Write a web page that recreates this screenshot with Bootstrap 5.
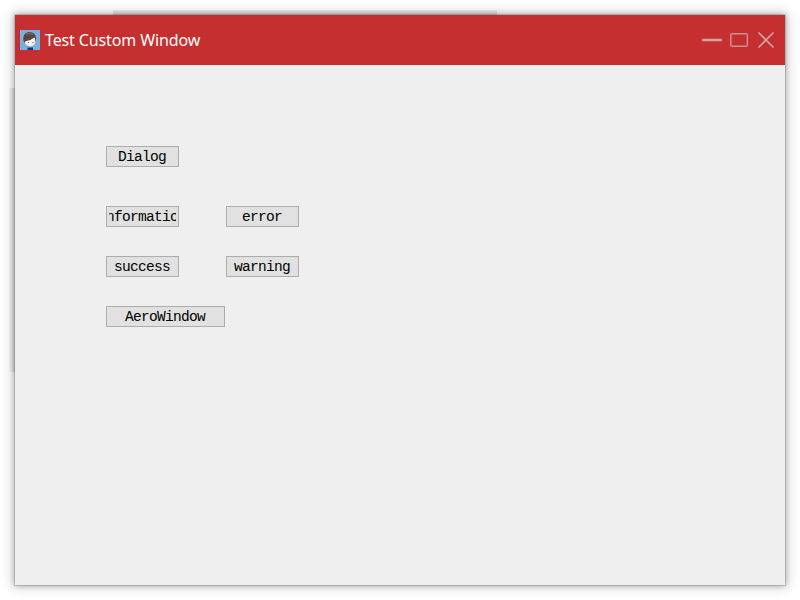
<!DOCTYPE html>
<html lang="en">
<head>
<meta charset="utf-8">
<meta name="viewport" content="width=device-width, initial-scale=1">
<title>Test Custom Window</title>
<link rel="stylesheet" href="https://cdn.jsdelivr.net/npm/bootstrap@5.3.0/dist/css/bootstrap.min.css">
<style>
  body { background: #fff; }
  .stage { width: 800px; height: 600px; padding: 15px; }
  .app-window {
    background: #efefef;
    box-shadow: 0 0 0 1px rgba(0,0,0,.12), 0 0 5px 1px rgba(0,0,0,.24), 0 0 13px 2px rgba(0,0,0,.18);
  }
  /* denser stretches of the window shadow */
  .shade-top { position: absolute; left: 98px; top: -5px; width: 384px; height: 5px; background: linear-gradient(rgba(0,0,0,.06), rgba(0,0,0,.13)); }
  .shade-left { position: absolute; left: -6px; top: 73px; width: 6px; height: 284px; background: linear-gradient(to right, rgba(0,0,0,.03), rgba(0,0,0,.12)); }
  .title-bar { height: 50px; background: #c62f2f; padding: 0 7px 0 5px; }
  .title-text { font: 16px/20px "Noto Sans", "Open Sans", sans-serif; letter-spacing: -.12px; color: #fff; margin-left: 5px; white-space: nowrap; }
  .win-btn { background: none; width: 20px; height: 20px; }
  .client { padding: 81px 0 0 91px; }
  .form-grid { display: grid; grid-template-columns: 73px 73px; gap: 29px 47px; margin: 39px 0 29px; }
  .btn-native {
    width: 73px; height: 21px; padding: 0 2px;
    border: 1px solid #adadad; border-radius: 0; background: #e1e1e1; color: #000;
    font: 14.5px/19px "Liberation Mono", monospace; letter-spacing: -.7px;
  }
  .btn-native:hover { background: #e5f1fb; border-color: #0078d7; color: #000; }
  .btn-native span { width: 67px; height: 19px; overflow: hidden; padding: 1px 1px 0 0; }
  .btn-wide { width: 119px; }
  .btn-wide span { width: 113px; }
</style>
</head>
<body>
<div class="stage overflow-hidden">
  <div class="app-window position-relative w-100 h-100">
    <div class="shade-top"></div>
    <div class="shade-left"></div>
    <header class="title-bar d-flex align-items-center">
      <svg class="flex-shrink-0" width="20" height="20" viewBox="0 0 20 20" aria-hidden="true">
        <rect width="20" height="20" fill="#78b1df"/>
        <path d="M7.5 20V17.5H13V20Z" fill="#143a70"/>
        <path d="M4.2 9Q4 14.5 9.5 16.5Q14.5 16 15.5 12V8Z" fill="#f8f1ef"/>
        <path d="M3.3 10.5Q2.5 3 8.5 2Q15.5 1.5 16 8V12.2Q15.2 10.8 14.5 7.2Q11 10.5 5.5 11.2L4.6 13Z" fill="#5b4541"/>
        <path d="M6 4.2Q9 2.6 13 4.4" fill="none" stroke="#8b706b"/>
        <path d="M8 12.6H9M12.4 12.6H13.6" stroke="#6b5a58"/>
      </svg>
      <div class="title-text">Test Custom Window</div>
      <div class="d-flex ms-auto align-items-center">
        <button class="win-btn border-0 p-0 d-flex" aria-label="Minimize">
          <svg width="20" height="20" viewBox="0 0 20 20"><path d="M1 10H19" stroke="#cfa4a4" stroke-width="2.4" stroke-linecap="round"/></svg>
        </button>
        <button class="win-btn border-0 p-0 d-flex mx-2" aria-label="Maximize">
          <svg width="20" height="20" viewBox="0 0 20 20"><rect x=".8" y="3.8" width="16.6" height="12.4" rx="1.3" fill="none" stroke="#cd9090" stroke-width="1.5"/></svg>
        </button>
        <button class="win-btn border-0 p-0 d-flex" aria-label="Close">
          <svg width="20" height="20" viewBox="0 0 20 20"><path d="M1 3L15 17M15 3L1 17" stroke="#d4a5a5" stroke-width="1.7" stroke-linecap="round"/></svg>
        </button>
      </div>
    </header>
    <main class="client">
      <button class="btn btn-native d-flex justify-content-center"><span class="d-flex justify-content-center">Dialog</span></button>
      <div class="form-grid">
        <button class="btn btn-native d-flex justify-content-center"><span class="d-flex justify-content-center">Information</span></button>
        <button class="btn btn-native d-flex justify-content-center"><span class="d-flex justify-content-center">error</span></button>
        <button class="btn btn-native d-flex justify-content-center"><span class="d-flex justify-content-center">success</span></button>
        <button class="btn btn-native d-flex justify-content-center"><span class="d-flex justify-content-center">warning</span></button>
      </div>
      <button class="btn btn-native btn-wide d-flex justify-content-center"><span class="d-flex justify-content-center">AeroWindow</span></button>
    </main>
  </div>
</div>
<script src="https://cdn.jsdelivr.net/npm/bootstrap@5.3.0/dist/js/bootstrap.bundle.min.js"></script>
</body>
</html>
